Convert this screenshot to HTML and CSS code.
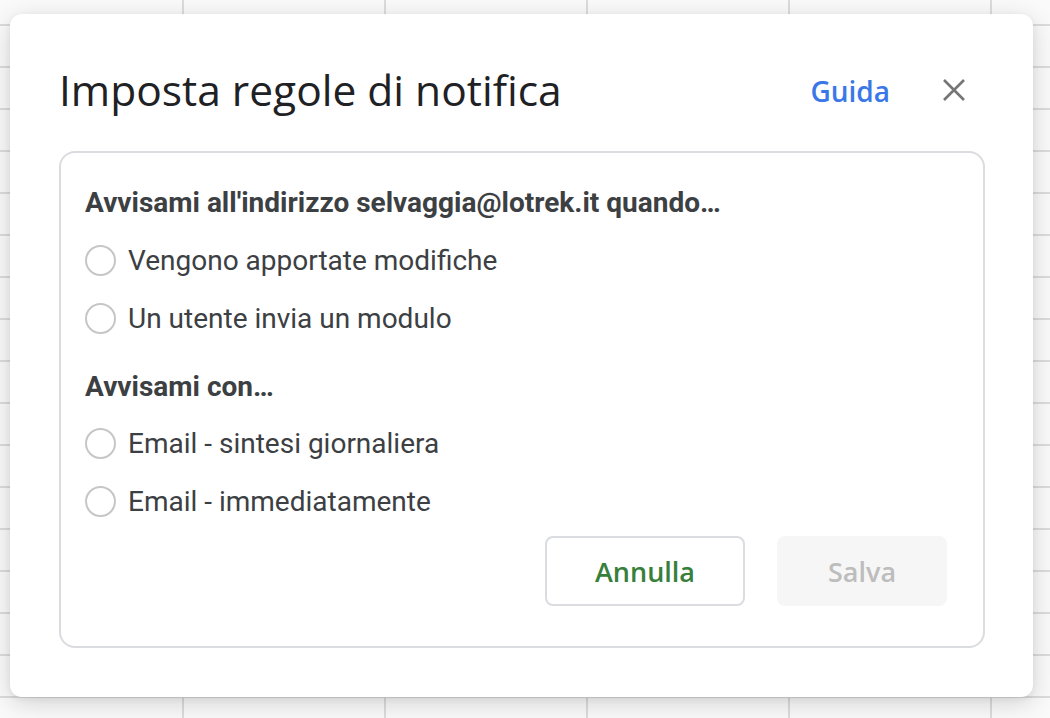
FILE: index.html
```html
<!DOCTYPE html>
<html lang="it">
<head>
<meta charset="utf-8">
<title>Imposta regole di notifica</title>
<link rel="stylesheet" href="styles.css">
</head>
<body>
<div class="sheet">
  <div class="dialog">
    <div class="header">
      <h1 class="title">Imposta regole di notifica</h1>
      <div class="header-actions">
        <a class="help">Guida</a>
        <span class="close">
          <svg width="24" height="24" viewBox="0 0 24 24"><path d="M2 2 L22 22 M22 2 L2 22" stroke="#757575" stroke-width="2.6" fill="none"/></svg>
        </span>
      </div>
    </div>
    <div class="panel">
      <div class="section-title">Avvisami all'indirizzo selvaggia@lotrek.it quando…</div>
      <label class="option"><span class="radio"></span><span>Vengono apportate modifiche</span></label>
      <label class="option"><span class="radio"></span><span>Un utente invia un modulo</span></label>
      <div class="section-title second">Avvisami con…</div>
      <label class="option"><span class="radio"></span><span>Email - sintesi giornaliera</span></label>
      <label class="option"><span class="radio"></span><span>Email - immediatamente</span></label>
      <div class="buttons">
        <button class="btn cancel">Annulla</button>
        <button class="btn save">Salva</button>
      </div>
    </div>
  </div>
</div>
</body>
</html>
```
FILE: styles.css
```css
html, body {
  margin: 0;
  padding: 0;
}
body {
  width: 1050px;
  height: 718px;
  overflow: hidden;
  background-color: #fafafa;
  background-image:
    linear-gradient(to right, #dcdcdc 2px, transparent 2px),
    linear-gradient(to bottom, #dcdcdc 2px, transparent 2px);
  background-size: 202px 42px, 202px 42px;
  background-position: 182px 0, 0 24px;
  font-family: Roboto, "Liberation Sans", sans-serif;
}
.sheet {
  padding: 14px 17px 21px 10px;
}
.dialog {
  width: 1023px;
  height: 683px;
  box-sizing: border-box;
  background: #fff;
  border-radius: 12px;
  box-shadow: 0 6px 26px rgba(0, 0, 0, 0.16), 0 2px 6px rgba(0, 0, 0, 0.06);
  padding: 50px 48px 49px 49px;
  display: flex;
  flex-direction: column;
}
.header {
  height: 52px;
  display: flex;
  align-items: center;
  justify-content: space-between;
  margin-bottom: 35px;
}
.title {
  margin: 0;
  font-family: "Open Sans", "Noto Sans", sans-serif;
  font-weight: 400;
  font-size: 42.5px;
  line-height: 52px;
  color: #202124;
  letter-spacing: 0;
}
.header-actions {
  display: flex;
  align-items: center;
  padding-right: 19px;
}
.help {
  font-family: "Open Sans", "Noto Sans", sans-serif;
  font-weight: 600;
  font-size: 28px;
  color: #3b78e7;
  margin-right: 52px;
  margin-top: 2px;
}
.close {
  width: 24px;
  height: 24px;
  display: flex;
}
.panel {
  flex: 1;
  border: 2px solid #dadce0;
  border-radius: 16px;
  padding: 31px 36px 40px 24px;
  display: flex;
  flex-direction: column;
}
.section-title {
  height: 36px;
  display: flex;
  align-items: center;
  font-weight: 700;
  font-size: 28px;
  color: #3c4043;
  margin-bottom: 11px;
}
.section-title.second {
  margin-top: 21px;
  margin-bottom: 10px;
}
.option {
  height: 58px;
  display: flex;
  align-items: center;
  font-size: 28px;
  color: #3c4043;
}
.radio {
  width: 31px;
  height: 31px;
  box-sizing: border-box;
  border: 2px solid #c6c6c6;
  border-radius: 50%;
  margin-right: 12px;
  flex: none;
}
.buttons {
  margin-top: 6px;
  display: flex;
  justify-content: flex-end;
  gap: 32px;
}
.btn {
  height: 70px;
  border-radius: 8px;
  font-family: "Open Sans", "Noto Sans", sans-serif;
  font-weight: 600;
  font-size: 27px;
  padding: 0;
}
.cancel {
  width: 200px;
  background: #fff;
  border: 2px solid #dadce0;
  color: #37803b;
}
.save {
  width: 170px;
  background: #f6f6f6;
  border: none;
  color: #bdbdbd;
}
```
